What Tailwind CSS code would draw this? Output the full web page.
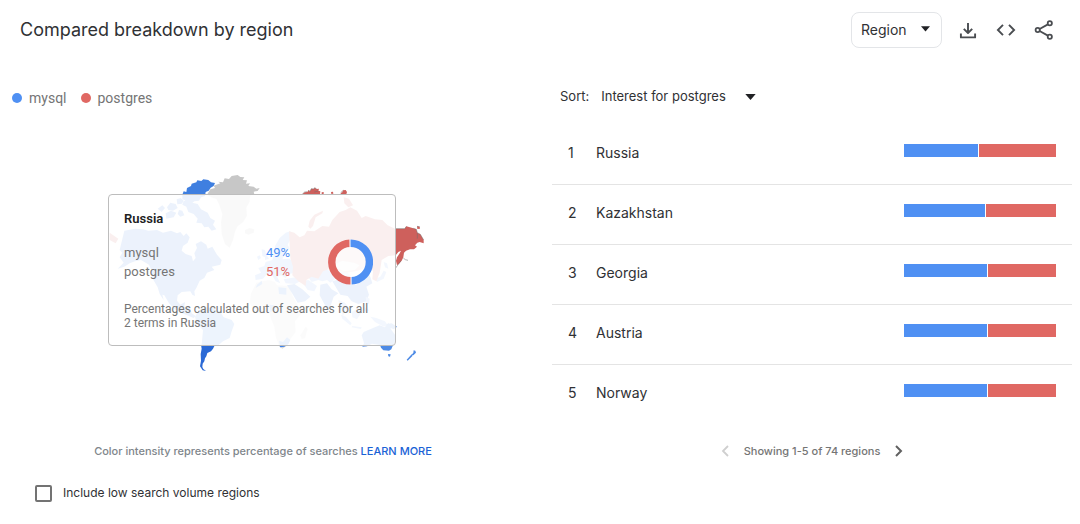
<!DOCTYPE html>
<html lang="en">
<head>
<meta charset="utf-8">
<meta name="viewport" content="width=device-width, initial-scale=1">
<title>Compared breakdown by region</title>
<script src="https://cdn.jsdelivr.net/npm/@tailwindcss/browser@4"></script>
</head>
<body class="bg-white font-[Inter,sans-serif] text-[#303134]">
<header class="flex h-[60px] items-center justify-between pr-6 pl-5">
  <h1 class="text-[18px] leading-7 text-[#303134]">Compared breakdown by region</h1>
  <div class="flex items-center gap-3.5">
    <div class="relative">
      <select aria-label="Resolution" class="block h-9 w-[91px] appearance-none rounded-lg border border-[#e3e5e8] bg-white pb-0.5 pl-[9px] text-[14px]">
        <option>Region</option>
      </select>
      <svg class="pointer-events-none absolute top-[14px] right-3 h-[6px] w-[9px]" viewBox="0 0 9 6" fill="#202124"><path d="M0 .3h9L4.500 5.500z"/></svg>
    </div>
    <button aria-label="Download" class="flex size-6 items-center justify-center">
      <svg class="size-6" viewBox="0 0 24 24" fill="none" stroke="#4a4d51" stroke-width="1.900"><path d="M12 5v9.500M7.800 10.800l4.200 4.200 4.200-4.200M4.900 15.500v3.900h14.200v-3.900" stroke-linejoin="round"/></svg>
    </button>
    <button aria-label="Embed" class="flex size-6 items-center justify-center">
      <svg class="size-6" viewBox="0 0 24 24" fill="none" stroke="#4a4d51" stroke-width="1.900"><path d="M9 6.800 3.900 12 9 17.200M15 6.800l5.100 5.200-5.100 5.200"/></svg>
    </button>
    <button aria-label="Share" class="flex size-6 items-center justify-center">
      <svg class="size-6" viewBox="0 0 24 24" fill="none" stroke="#4a4d51" stroke-width="1.800"><circle cx="5.700" cy="12" r="2.100"/><circle cx="17.800" cy="5.300" r="2.100"/><circle cx="17.800" cy="18.700" r="2.100"/><path d="m7.600 11 8.300-4.600M7.600 13l8.300 4.600"/></svg>
    </button>
  </div>
</header>

<main class="grid grid-cols-2 gap-6 px-2">
  <section class="pl-1">
    <ul class="flex h-[76px] items-center gap-3.5 font-[Roboto,sans-serif] text-[14px] text-[#757575]">
      <li class="flex items-center gap-[7px]"><span class="size-2.5 rounded-full bg-[#4f90f3]"></span>mysql</li>
      <li class="flex items-center gap-[7px]"><span class="size-2.5 rounded-full bg-[#e06863]"></span>postgres</li>
    </ul>

    <div class="relative mx-auto mt-[34px] w-[330px]">
      <svg class="block h-[210px] w-full" viewBox="0 0 990 630" role="img" aria-label="World map of searches">
        <!-- North America -->
        <g fill="#3f7fe0">
          <path d="M232 74l4-10 8 2 2-12 12-6 2-7 14-4 3-6 12 2 6-5 15 2 8 7 12 2-4 9-9 5-6 9-9 4-2 12-12 4-6 10-14 2-10 8-12-4-8-8-6-2z"/>
          <path d="M215 88l12-4 9 8-5 9-14 2zM186 112l10-14 16 4 6 12-14 8-14-2zM236 94l16-6 10 10 16 4 10 16 20 10 8 16 14 8-6 12 10 14-14 4-10-12-12 2-8-12-16-2 4-12-12-14-16-6-6-16-12-6zM158 116l14-10 8 8-10 12zM182 130l16-8 16 6-8 14-22 4zM222 120l10 2 6 14-12 4-8-8z"/>
          <path d="M58 182l32-6 24 2 16 4 26-2 18 8 24-6 18 8 10-4 10 12 8-8 10 12-6 16-14 10-4 14 12 10 18 6 4 16 8-10-4-14 8-16-4-12 16-8 16 10 4 12 14-6 14 24 14 16-4 14-26 6 8 10-22 8-8 16-14 8-10 22-6 10 2 14-8-4-6-10-26 2-12 10-2 16 10 12 14-8-2 14 18 4 4 16 12 8-6 6-24-10-30-14-20-20-14-24-6-2 4 16-12-18-6-20-14-24-4-26-8-18-24-14-18 4-16 6-16 10-20 6 18-18-12-16 8-14-8-8z"/>
        </g>
        <!-- Greenland -->
        <path fill="#c7c7c7" d="M306 74l10-16 14-4-4-7 20-7-6-5 14 2 5-12 13 2 8-9 18-3 8 6 12 1-5 8 13 1-3 10 12-1-5 8 16 2 8 6 10-2-6 9-12 2 2 8-12 2-2 20-10 18 2 24-12 20-16 12-8 16-6 26-10 22-14-10-10-30-2-36 4-24-10-30-8-16-12-4z"/>
        <path fill="#c7c7c7" d="M420 180l14-6 14 4-2 10-16 6-10-4z"/>
        <!-- South America -->
        <path fill="#4e8dea" d="M270 440L282 420 302 412 324 414 346 426 356 442 380 450 388 462 380 484 374 504 354 514 340 526 290 526 294 480 276 462z"/>
        <path fill="#2a69d6" d="M288 524h42l-6 12-6 8-11 5-3 10-4 6-2 9-5 7-1 10 3 6 8 6-10-2-8-12 3-17-1-20 3-16z"/>
        <!-- Africa -->
        <path fill="#d9d9d9" d="M454 338l16-4 22-4 18 6 6 10 36 2 12 32 16 28 22-2-12 24-20 24 2 32-16 22-8 18-16 10-10-8-10-28-4-30-10-24-4-16-28 2-18-10-14-22 4-30z"/>
        <path fill="#d9d9d9" d="m602 470 6 6-8 28-10 4-4-12z"/>
        <path fill="#3f83ea" d="m522 512 12 4 12-14 10 8-6 12-12 8-13 2zM494 404l14 2 2 14-14 6zM520 352l24 2v20l-22-2zM470 332l-14 12-4 10 20-12z"/>
        <!-- Europe -->
        <path fill="#75a7f2" d="M508 248l2-20 14-24 18-16 14-4 2 20-10 20 6 12-16 18-6 14 22-2 18 20 14 2-4 18-30 6-10 12-14-8-12 4 10 20-14-6-12-22-12-2-14 16-22 4-2-14 18-8-8-14 18-6 4-12 20-6zM480 262l-8-4-2-20 10 2 4 14 8 12-12 4zM456 260l8-4 4 8-8 6z"/>
        <!-- Asia -->
        <path fill="#79a8f2" d="M600 308l18-14 30-4 32 16 22-4 26 6 14 14-18 16-20-4-12-8-16 12-10-8-14 4-12-4-20 6zM536 328l36-6 16 10-18 10-28-2zM590 334l20-4 26 18-8 16-20-4z"/>
        <path fill="#3e7cdd" d="M546 346l22-4 24 16 24 22-16 14-22 4-14-24zM646 344l20-4 14 18 20 12-14 10-8 24-10 18-10-20-14-26zM682 334l32-10 16 12 24 8 22-14-10-22 18-6 12 18 6 20-18 10 8 24-8 20-24 8-20-8-12-16-22-4z"/>
        <path fill="#86b0f1" d="M700 390l20 8 14 18-4 16-8-16-8 22-8-20zM708 434l14 6 18 20-4 6-24-20zM740 426l18-10 10 14-12 18-14-6zM742 468l28 4-2 5-28-5zM782 380l12 6-2 16-8-2zM778 412l14 8-8 8-10-10zM796 440l18 4 26 10 12 18-20-4-22-12zM810 326l16-6 10-18 8 4-8 20-20 10zM836 276l10 4 4 16-10-4z"/>
        <!-- Russia -->
        <g fill="#ce605c">
          <path d="M552 184l16 4 16 14 14-6 8-14 22 2 24-16 20 2 10-20 22-24 18-6 14-8 20 10 14 22 12-6 28 10 22 2 16 16L870 176H899L904 169 925 175 934 178 937 188 946 193 956 210V220L944 216 937 218 930 226 936 230 927 238 915 238 903 242 897 248 895 262 890 272 882 281 876 286 873 272 876 262 884 250 888 242 880 246 872 256 850 258 830 270 824 308 814 334 802 328 804 302 786 292 758 302 726 308 698 300 676 296 654 304 640 326 620 320 604 330 602 348 580 334 562 316 564 290 556 264z"/>
          <path d="M610 170l4-18 14-18 26-12-2 8-20 12-8 26-8 8zM592 73l7-6 8-1 4-6 3 5 5-9 7 1 3-4 6 4 7-1-2 6 6 2-1 9zM650 67l6-1v6h-6zM678 66l6-1 1 6-6 1zM707 69l5-2 2-6 8-1 4 6-2 7-16 1zM936 169l8 1 1 6-8 1zM14 188l26 18-8 14-18-10zM716 82l16 4 12 20-14 6-12-12z"/>
        </g>
        <path fill="none" stroke="#6e6e6e" stroke-width="1.500" d="M592 72l7-6 8-1M611 60l3 5 5-9 7 1 3-4 6 4M628 66l12-3M707 68l8-7M936 169l8 1M870 176h29l5-7M925 175l9 3 3 10 9 5 10 17M937 190v16M895 264l6 5 8 2M888 272l-16 22"/>
        <path fill="#ddd" d="M690 282l22-10 36 6 16 8-14 14-34 4-22-10z"/>
        <!-- Oceania -->
        <path fill="#4d8ae5" d="M772 530l5-10-7-24 6-10 28-12 20-8 16 6 10-14 8 20 12 16 2 18-10 18-3 8-7 4-17-1-7-8-3-8-24-4-15 8zM849 552l8 1-2 7-5-1zM926 541l5 1 2 6-8 8-5-2 5-6zM920 553l3 4-9 9-6 6-3-3zM844 462l16-2 16 10-10 8-18-8z"/>
      </svg>

      <div class="absolute top-6 left-[3px] w-[288px] rounded-sm border border-[#bdbdbd] bg-white/90 px-[15px] pt-[15px] pb-[15px] font-[Roboto,sans-serif] text-[#757575]">
        <h2 class="text-[13px] leading-[18px] font-semibold text-[#212121]">Russia</h2>
        <div class="mt-[11px] flex items-center">
          <dl class="grid flex-1 grid-cols-[142px_1fr] text-[13px] leading-[19px]">
            <dt>mysql</dt><dd class="text-[#4f90f3]">49%</dd>
            <dt>postgres</dt><dd class="text-[#e06863]">51%</dd>
          </dl>
          <svg class="mr-[7px] size-[46px]" viewBox="0 0 46 46" role="img" aria-label="mysql 49%, postgres 51%">
            <circle cx="23" cy="23" r="15.500" fill="#fff" fill-opacity=".6"/>
            <g fill="none" stroke-width="7.400"><path stroke="#e06863" d="M23 4.200a18.800 18.800 0 1 0 1.200 37.600"/><path stroke="#4f90f3" d="M23 4.200a18.800 18.800 0 0 1 1.200 37.600"/></g>
            <path stroke="#fff" d="M23 0v8M24 38v8"/>
          </svg>
        </div>
        <p class="mt-[17px] text-[12px] leading-[14px]">Percentages calculated out of searches for all<br>2 terms in Russia</p>
      </div>
    </div>

    <p class="mt-[61px] pr-3.5 text-center text-[11px] leading-5 font-medium text-[#80868b]">Color intensity represents percentage of searches <a href="#" class="text-[#1a62d6]">LEARN MORE</a></p>
    <label class="mt-5 ml-[23px] flex items-center gap-[11px] text-[12px] leading-6">
      <input type="checkbox" class="size-[17px] appearance-none rounded-xs border-2 border-[#737373] bg-white">Include low search volume regions
    </label>
  </section>

  <section>
    <div class="flex h-16 items-center gap-3 pt-2.5 pl-2 text-[13px]">
      <label for="sort">Sort:</label>
      <div class="relative">
        <select id="sort" class="block h-8 w-[155px] appearance-none bg-white">
          <option>Interest for postgres</option>
        </select>
        <svg class="pointer-events-none absolute top-[13px] right-0 h-[6px] w-[11px]" viewBox="0 0 11 6" fill="#202124"><path d="M.3 0h10.400L5.500 6z"/></svg>
      </div>
    </div>
    <ol class="text-[14px]">
      <li class="flex h-[60px] items-center pr-4 pb-1 pl-4"><span class="w-7">1</span><span class="flex-1">Russia</span><span class="mb-1 flex h-[13px] w-[152px] gap-px"><i class="bg-[#4f90f3]" style="width:48.500%"></i><i class="flex-1 bg-[#e06863]"></i></span></li>
      <li class="flex h-[60px] items-center border-t border-[#e4e4e4] pr-4 pb-1 pl-4"><span class="w-7">2</span><span class="flex-1">Kazakhstan</span><span class="mb-1 flex h-[13px] w-[152px] gap-px"><i class="bg-[#4f90f3]" style="width:53.500%"></i><i class="flex-1 bg-[#e06863]"></i></span></li>
      <li class="flex h-[60px] items-center border-t border-[#e4e4e4] pr-4 pb-1 pl-4"><span class="w-7">3</span><span class="flex-1">Georgia</span><span class="mb-1 flex h-[13px] w-[152px] gap-px"><i class="bg-[#4f90f3]" style="width:54.600%"></i><i class="flex-1 bg-[#e06863]"></i></span></li>
      <li class="flex h-[60px] items-center border-t border-[#e4e4e4] pr-4 pb-1 pl-4"><span class="w-7">4</span><span class="flex-1">Austria</span><span class="mb-1 flex h-[13px] w-[152px] gap-px"><i class="bg-[#4f90f3]" style="width:54.600%"></i><i class="flex-1 bg-[#e06863]"></i></span></li>
      <li class="flex h-[60px] items-center border-t border-[#e4e4e4] pr-4 pb-1 pl-4"><span class="w-7">5</span><span class="flex-1">Norway</span><span class="mb-1 flex h-[13px] w-[152px] gap-px"><i class="bg-[#4f90f3]" style="width:54.600%"></i><i class="flex-1 bg-[#e06863]"></i></span></li>
    </ol>
    <nav aria-label="Pages" class="mt-[15px] flex h-6 items-center justify-center gap-[15px] text-[11px] font-medium text-[#757575]">
      <button aria-label="Previous" disabled><svg class="h-3 w-2" viewBox="0 0 8 12" fill="none" stroke="#cfcfcf" stroke-width="1.800"><path d="M7 1 2 6l5 5"/></svg></button>
      <span>Showing 1-5 of 74 regions</span>
      <button aria-label="Next"><svg class="h-3 w-2" viewBox="0 0 8 12" fill="none" stroke="#616161" stroke-width="2"><path d="m1 1 5 5-5 5"/></svg></button>
    </nav>
  </section>
</main>
</body>
</html>
